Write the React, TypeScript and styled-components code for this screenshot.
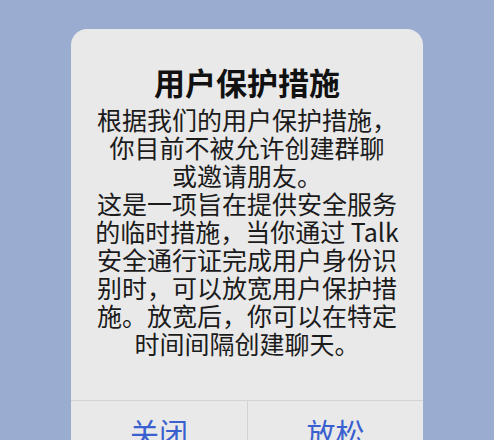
import React from 'react';
import styled, { createGlobalStyle } from 'styled-components';

const GlobalStyle = createGlobalStyle`
    html, body {
        margin: 0;
        padding: 0;
        background: #9aadd0;
        height: 100%;
        overflow: hidden;
    }
    body {
        font-family: "Noto Sans CJK SC", "Noto Sans", sans-serif;
    }
`;

const Page = styled.div`
    display: flex;
    justify-content: center;
    padding-top: 29px;
`;

const Dialog = styled.div`
    width: 352px;
    background: #e9e9e9;
    border-radius: 16px;
    display: flex;
    flex-direction: column;
`;

const Content = styled.div`
    padding: 35px 0 43px;
    display: flex;
    flex-direction: column;
    align-items: center;
`;

const Title = styled.div`
    font-size: 31px;
    line-height: 36px;
    font-weight: 700;
    color: #111;
    margin-bottom: 5px;
`;

const Line = styled.div`
    font-size: 25px;
    line-height: 28px;
    color: #1b1b1b;
    white-space: nowrap;
    text-align: center;
`;

const Actions = styled.div`
    display: grid;
    grid-template-columns: 1fr 1fr;
    border-top: 1px solid #d3d3d3;
`;

const Action = styled.button<{ $divider?: boolean }>`
    height: 62px;
    border: none;
    border-left: ${({ $divider }) => ($divider ? '1px solid #d3d3d3' : 'none')};
    background: transparent;
    font-family: inherit;
    font-size: 29px;
    color: #3a5fcf;
    padding: 0;
    line-height: 62px;
`;

const lines = [
    '根据我们的用户保护措施，',
    '你目前不被允许创建群聊',
    '或邀请朋友。',
    '这是一项旨在提供安全服务',
    '的临时措施，当你通过 Talk',
    '安全通行证完成用户身份识',
    '别时，可以放宽用户保护措',
    '施。放宽后，你可以在特定',
    '时间间隔创建聊天。',
];

const App = () => {
    return (
        <>
            <GlobalStyle />
            <Page>
                <Dialog>
                    <Content>
                        <Title>用户保护措施</Title>
                        {lines.map((line) => (
                            <Line key={line}>{line}</Line>
                        ))}
                    </Content>
                    <Actions>
                        <Action>关闭</Action>
                        <Action $divider>放松</Action>
                    </Actions>
                </Dialog>
            </Page>
        </>
    );
};

export default App;
